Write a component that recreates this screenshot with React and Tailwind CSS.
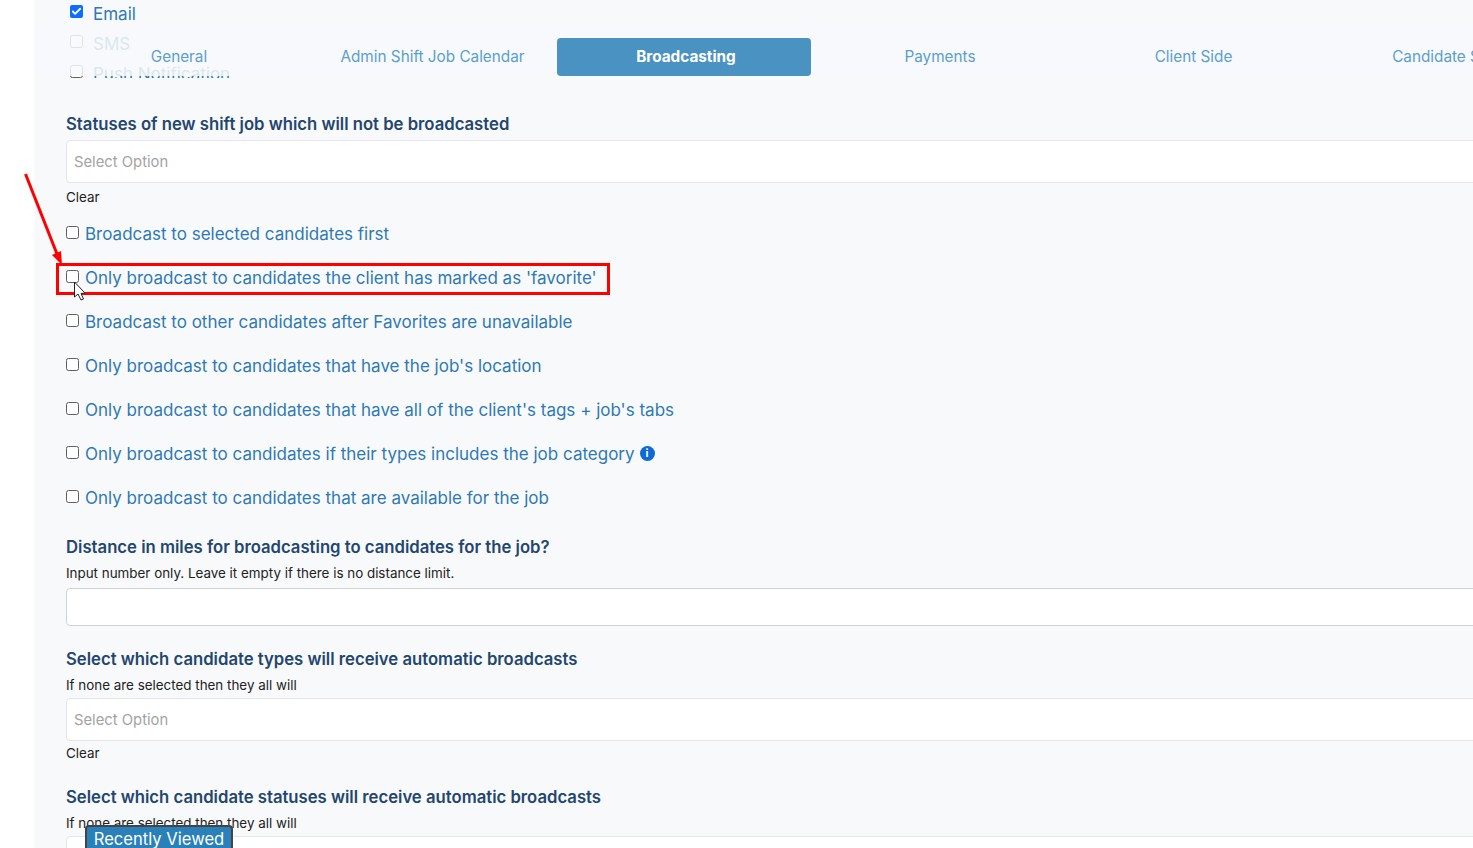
import { Check } from "lucide-react";

const tabs = [
  { label: "General", w: "w-[254px]" },
  { label: "Admin Shift Job Calendar", w: "w-[253px]" },
  { label: "Broadcasting", w: "w-[254px]", active: true },
  { label: "Payments", w: "w-[254px]" },
  { label: "Client Side", w: "w-[253px]" },
  { label: "Candidate Side", w: "w-[254px]" },
];

const options = [
  "Broadcast to selected candidates first",
  "Only broadcast to candidates the client has marked as 'favorite'",
  "Broadcast to other candidates after Favorites are unavailable",
  "Only broadcast to candidates that have the job's location",
  "Only broadcast to candidates that have all of the client's tags + job's tabs",
  "Only broadcast to candidates if their types includes the job category",
  "Only broadcast to candidates that are available for the job",
];

function Box() {
  return <span className="block w-[13px] h-[13px] shrink-0 -mt-[1px] rounded-[2.5px] border border-[#5f5f5f] bg-white" />;
}

function SelectBox() {
  return (
    <div className="h-[43px] w-[1460px] flex items-center pl-[7px] pt-[1px] bg-white border border-[#e4e6ea] rounded-[4px] text-[14.8px] text-[#a3a3a3]">
      Select Option
    </div>
  );
}

function Heading({ children }) {
  return <h3 className="text-[16.7px] leading-[24px] font-semibold text-[#23466e]">{children}</h3>;
}

function Hint({ className, children }) {
  return <p className={`${className} text-[13.4px] leading-[18px] text-[#222]`}>{children}</p>;
}

export default function App() {
  return (
    <div
      className="relative h-[848px] overflow-hidden bg-white flex"
      style={{ fontFamily: "Inter, 'Open Sans', sans-serif" }}
    >
      <div className="w-[34px] shrink-0" />
      <main className="relative flex-1 min-w-0 bg-[#f8f9fb] pl-8">
        {/* scrolled checkboxes under the sticky tabs */}
        <div className="h-[78px] overflow-hidden pl-1 text-[17px] text-[#2e79b5]">
          <div className="flex items-center gap-[10px] h-[26px]">
            <span className="w-[13px] h-[13px] rounded-[2px] bg-[#0d6efd] flex items-center justify-center -mt-[3px]">
              <Check size={11} strokeWidth={4} color="#fff" />
            </span>
            <span className="pt-[3px]">Email</span>
          </div>
          <div className="flex items-center gap-[10px] h-[30px] mt-[2px]">
            <span className="-mt-[3px]"><Box /></span>
            <span className="pt-[3px]">SMS</span>
          </div>
          <div className="flex items-center gap-[10px] h-[30px]">
            <span className="-mt-[3px]"><Box /></span>
            <span className="pt-[3px]">Push Notification</span>
          </div>
        </div>

        <div className="absolute left-0 right-0 top-[28px] h-[48px] bg-[#f8f9fb]/85" />
        <div className="absolute left-0 right-0 top-[38px] flex pl-4">
          {tabs.map((t) => (
            <div
              key={t.label}
              className={`${t.w} shrink-0 h-[38px] rounded-[4px] flex items-center justify-center pl-1 text-[15.3px] ${
                t.active ? "bg-[#4a92c2] text-white font-bold" : "text-[#5a9fcf]"
              }`}
            >
              <span className="whitespace-nowrap">{t.label}</span>
            </div>
          ))}
        </div>

        <div className="pt-[34px]">
          <Heading>Statuses of new shift job which will not be broadcasted</Heading>
        </div>
        <div className="mt-[4px]">
          <SelectBox />
        </div>
        <Hint className="mt-[5px]">Clear</Hint>

        <div className="mt-[5px] flex flex-col">
          {options.map((o, i) => (
            <label key={o} className="h-[44px] flex items-center gap-[6px] text-[17px] text-[#2e79b5]">
              <Box />
              <span className="whitespace-nowrap pt-[3px]">{o}</span>
              {i === 5 && (
                <span className="-ml-[1px] mt-[1px] w-[15px] h-[15px] rounded-full bg-[#0d6ad6] text-white text-[11px] font-bold flex items-center justify-center">
                  i
                </span>
              )}
            </label>
          ))}
        </div>

        <div className="mt-[16px]">
          <Heading>Distance in miles for broadcasting to candidates for the job?</Heading>
        </div>
        <Hint className="mt-[5px]">Input number only. Leave it empty if there is no distance limit.</Hint>
        <div className="mt-[6px] h-[38px] w-[1460px] bg-white border border-[#cfd3d8] rounded-[4px]" />

        <div className="mt-[21px]">
          <Heading>Select which candidate types will receive automatic broadcasts</Heading>
        </div>
        <Hint className="mt-[5px]">If none are selected then they all will</Hint>
        <div className="mt-[4px]">
          <SelectBox />
        </div>
        <Hint className="mt-[3px]">Clear</Hint>

        <div className="mt-[23px]">
          <Heading>Select which candidate statuses will receive automatic broadcasts</Heading>
        </div>
        <Hint className="mt-[5px]">If none are selected then they all will</Hint>
        <div className="mt-[4px]">
          <SelectBox />
        </div>
      </main>

      {/* annotation drawn over the page */}
      <div className="absolute left-[56px] top-[263px] w-[554px] h-[32px] border-[3px] border-[#ff0000]" />
      <svg className="absolute left-0 top-0 pointer-events-none" width="120" height="320" viewBox="0 0 120 320">
        <path d="M25.5 174 L57 254" stroke="#ff0000" strokeWidth="3" fill="none" />
        <path d="M62 265 L52 255 L61 251 Z" fill="#ff0000" />
        <path d="M74.5 282 V297 L78 294 L81 300 L83.5 299 L81 293.5 L85 293 Z" fill="#fff" stroke="#222" strokeWidth="1" />
      </svg>

      <div className="absolute left-[85px] top-[825px] w-[148px] h-[23px] bg-[#2a80b9] border-2 border-b-0 border-[#444] rounded-t-[4px] text-white text-[16.6px] leading-[25px] text-center whitespace-nowrap">
        Recently Viewed
      </div>
    </div>
  );
}
